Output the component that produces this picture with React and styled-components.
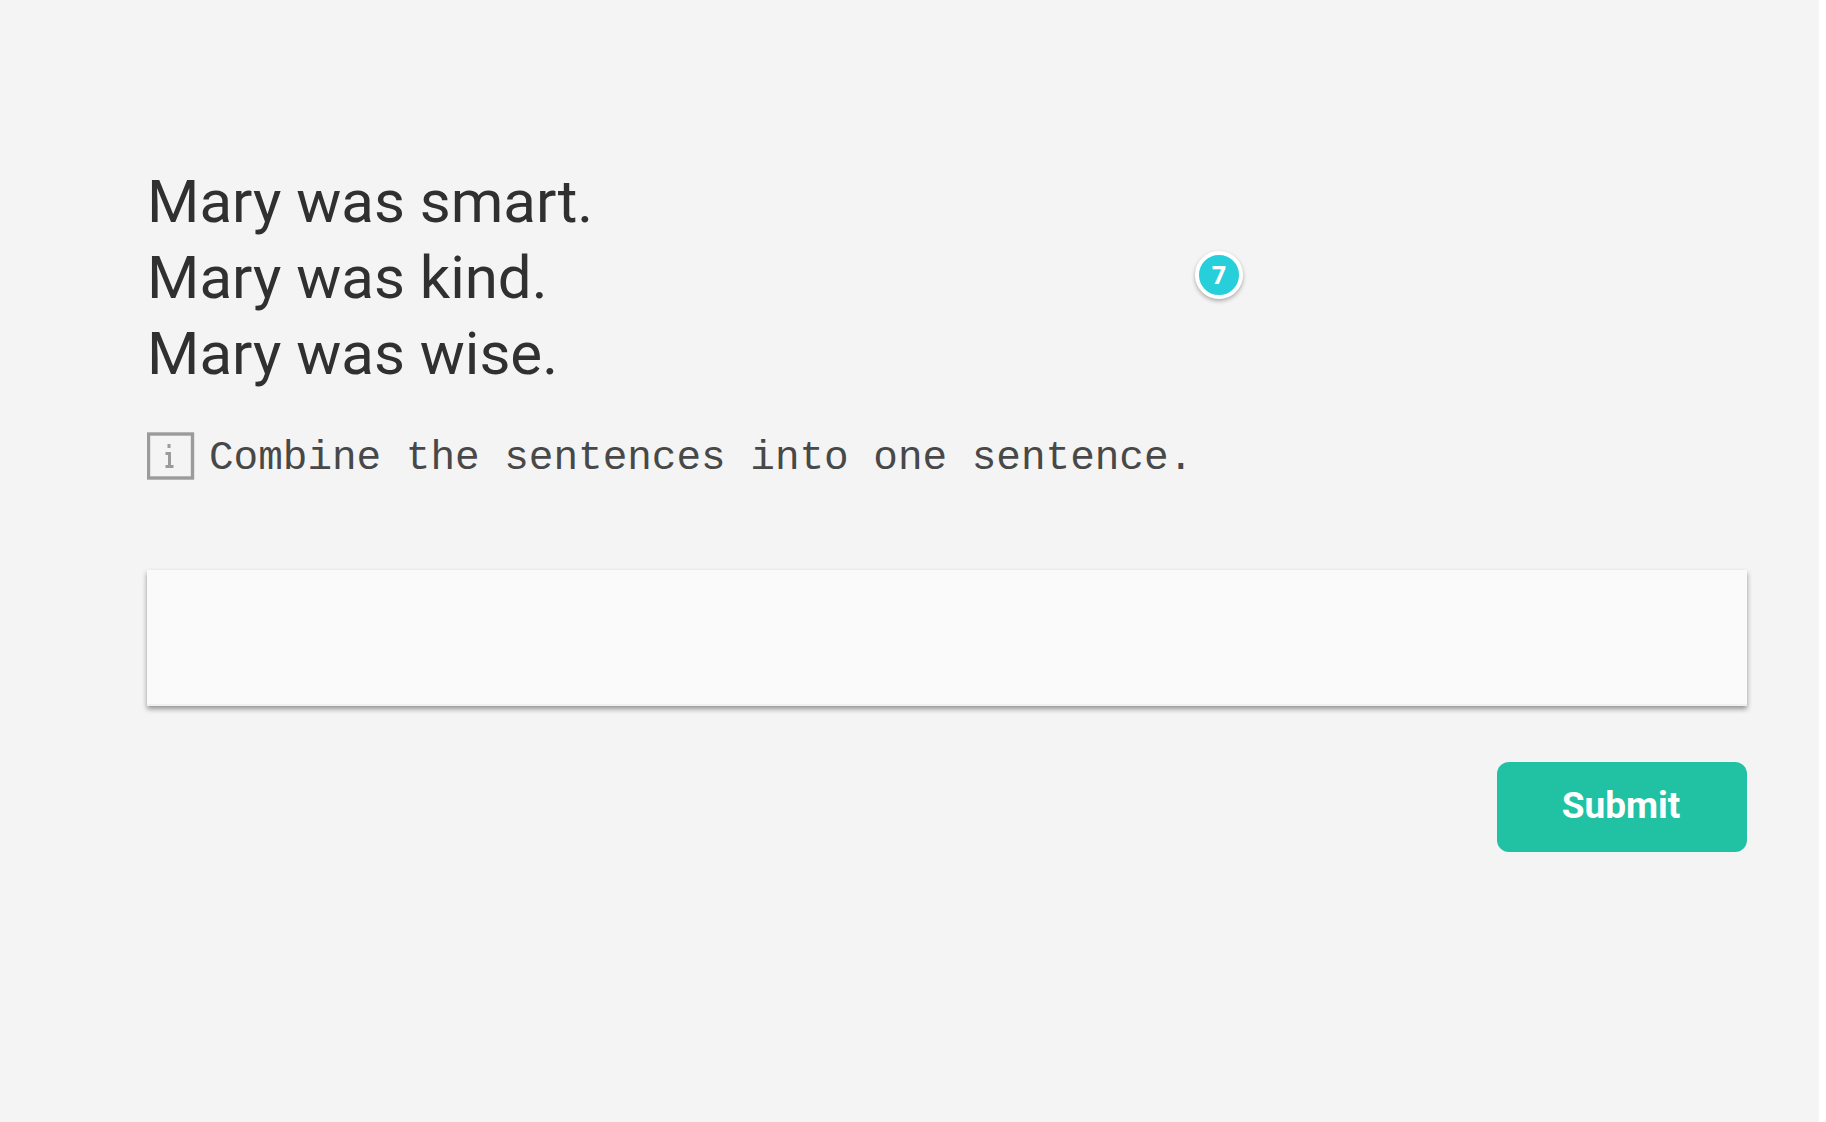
import React from "react";
import styled, { createGlobalStyle } from "styled-components";

const GlobalStyle = createGlobalStyle`
  * { box-sizing: border-box; }
  body {
    margin: 0;
    background: #ffffff;
    font-family: Roboto, sans-serif;
  }
`;

const Page = styled.main`
  min-height: 100vh;
  margin-right: 7px;
  padding: 164px 72px 64px 147px;
  background: #f4f4f4;
`;

const Prompt = styled.section`
  position: relative;
`;

const Sentences = styled.h1`
  margin: 0;
  color: #303030;
  font-size: 60px;
  font-weight: 400;
  line-height: 76px;
`;

const Sentence = styled.span`
  display: block;
`;

const CountBadge = styled.span`
  position: absolute;
  top: 87px;
  left: 1048px;
  display: flex;
  align-items: center;
  justify-content: center;
  width: 48px;
  height: 48px;
  padding-bottom: 2px;
  border: 4px solid #ffffff;
  border-radius: 50%;
  background: #27cfda;
  box-shadow: 0 2px 4px rgba(0, 0, 0, 0.3);
  color: #ffffff;
  font-family: "Open Sans", sans-serif;
  font-size: 25px;
  font-weight: 700;
  line-height: 32px;
`;

const Form = styled.form`
  display: flex;
  flex-direction: column;
`;

const Instruction = styled.label`
  display: flex;
  align-items: flex-start;
  gap: 14px;
  margin-top: 40px;
  color: #484848;
  font-family: "Liberation Mono", monospace;
  font-size: 41px;
  line-height: 52px;
`;

const InfoIcon = styled.svg`
  flex: none;
  width: 48px;
  height: 48px;
`;

const Answer = styled.textarea`
  display: block;
  width: 100%;
  height: 136px;
  margin-top: 86px;
  padding: 32px;
  border: 0;
  outline: 0;
  resize: none;
  background: #fafafa;
  box-shadow: 0 3px 5px rgba(0, 0, 0, 0.4), inset 0 -2px 0 #f0f0f0;
  color: #303030;
  font: 400 36px/48px Roboto, sans-serif;
`;

const SubmitButton = styled.button`
  align-self: flex-end;
  width: 250px;
  height: 90px;
  margin-top: 56px;
  padding: 0 2px 2px 0;
  border: 0;
  border-radius: 12px;
  background: #21c1a4;
  color: #ffffff;
  font: 700 37px/48px Roboto, sans-serif;
  cursor: pointer;
`;

const sentences = ["Mary was smart.", "Mary was kind.", "Mary was wise."];

export default function App() {
  return (
    <>
      <GlobalStyle />
      <Page>
        <Prompt>
          <Sentences>
            {sentences.map((text) => (
              <Sentence key={text}>{text}</Sentence>
            ))}
          </Sentences>
          <CountBadge>7</CountBadge>
        </Prompt>
        <Form onSubmit={(event) => event.preventDefault()}>
          <Instruction htmlFor="answer">
            <InfoIcon viewBox="0 0 48 48" fill="none" stroke="#9b9b9b" aria-hidden="true">
              <rect x="1.5" y="2" width="44" height="44" strokeWidth="3.4" />
              <path d="M20.5 14h3" strokeWidth="4" />
              <path d="M18.5 21.5h4v13M18.5 34.5h8" strokeWidth="3" />
            </InfoIcon>
            Combine the sentences into one sentence.
          </Instruction>
          <Answer id="answer" />
          <SubmitButton type="submit">Submit</SubmitButton>
        </Form>
      </Page>
    </>
  );
}
